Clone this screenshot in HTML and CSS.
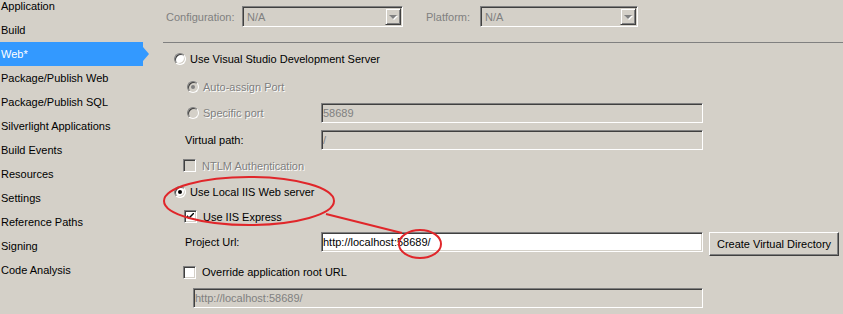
FILE: index.html
```html
<!DOCTYPE html>
<html lang="en">

<head>
    <meta charset="UTF-8">
    <title>Web - Project Properties</title>
    <link rel="stylesheet" href="styles.css">
</head>

<body>
    <div class="page">
        <nav class="sidebar">
            <div class="nav-item">Application</div>
            <div class="nav-item">Build</div>
            <div class="nav-item active">Web*</div>
            <div class="nav-item">Package/Publish Web</div>
            <div class="nav-item">Package/Publish SQL</div>
            <div class="nav-item">Silverlight Applications</div>
            <div class="nav-item">Build Events</div>
            <div class="nav-item">Resources</div>
            <div class="nav-item">Settings</div>
            <div class="nav-item">Reference Paths</div>
            <div class="nav-item">Signing</div>
            <div class="nav-item">Code Analysis</div>
        </nav>

        <main class="panel">
            <div class="toolbar">
                <span class="toolbar-label config-label">Configuration:</span>
                <div class="combo config-combo">
                    <span>N/A</span>
                    <span class="combo-btn"></span>
                </div>
                <span class="toolbar-label platform-label">Platform:</span>
                <div class="combo platform-combo">
                    <span>N/A</span>
                    <span class="combo-btn"></span>
                </div>
            </div>
            <div class="divider"></div>

            <div class="form">
                <!-- Visual Studio Development Server -->
                <div class="row row-vs top-level">
                    <label class="option">
                        <span class="radio"></span>
                        <span>Use Visual Studio Development Server</span>
                    </label>
                </div>
                <div class="row row-auto sub">
                    <label class="option disabled-text">
                        <span class="radio disabled checked"></span>
                        <span>Auto-assign Port</span>
                    </label>
                </div>
                <div class="row row-port sub">
                    <label class="option label-col port-col disabled-text">
                        <span class="radio disabled"></span>
                        <span>Specific port</span>
                    </label>
                    <div class="textbox">58689</div>
                </div>
                <div class="row row-path field">
                    <span class="label-col field-col">Virtual path:</span>
                    <div class="textbox">/</div>
                </div>
                <div class="row row-ntlm check">
                    <label class="option check-option disabled-text">
                        <span class="checkbox disabled"></span>
                        <span>NTLM Authentication</span>
                    </label>
                </div>

                <!-- Local IIS -->
                <div class="row row-iis top-level">
                    <label class="option">
                        <span class="radio checked"></span>
                        <span>Use Local IIS Web server</span>
                    </label>
                </div>
                <div class="row row-express check-express">
                    <label class="option check-option">
                        <span class="checkbox">
                            <svg width="7" height="7" viewBox="0 0 7 7">
                                <path d="M0 2 L0 4 L2 6 L7 1 L7 -1 L2 4 Z" fill="#000" />
                            </svg>
                        </span>
                        <span>Use IIS Express</span>
                    </label>
                </div>
                <div class="row row-url field">
                    <span class="label-col field-col">Project Url:</span>
                    <div class="textbox enabled">http://localhost:58689/</div>
                    <button class="btn">Create Virtual Directory</button>
                </div>
                <div class="row row-override check">
                    <label class="option check-option">
                        <span class="checkbox"></span>
                        <span>Override application root URL</span>
                    </label>
                </div>
                <div class="row row-root nested">
                    <div class="textbox wide">http://localhost:58689/</div>
                </div>
            </div>
        </main>

        <svg class="marks" width="843" height="314" viewBox="0 0 843 314">
            <ellipse cx="249" cy="201" rx="85" ry="24" />
            <line x1="326" y1="214" x2="402" y2="233" />
            <ellipse cx="420" cy="244" rx="21" ry="14" />
        </svg>
    </div>
</body>

</html>
```

FILE: styles.css
```css
body {
    margin: 0;
    background-color: #d4d0c8;
    font-family: "Liberation Sans", Arial, sans-serif;
    font-size: 11px;
    color: #000;
}

.page {
    position: relative;
    display: flex;
    width: 843px;
    height: 314px;
    overflow: hidden;
}

/* Left navigation */
.sidebar {
    width: 163px;
    flex: none;
    margin-top: -6px;
}

.nav-item {
    position: relative;
    box-sizing: border-box;
    width: 143px;
    height: 24px;
    line-height: 24px;
    padding-left: 1px;
    white-space: nowrap;
}

.nav-item.active {
    background-color: #3399ff;
    color: #fff;
}

.nav-item.active::after {
    content: "";
    position: absolute;
    left: 100%;
    top: 5px;
    border-left: 6px solid #3399ff;
    border-top: 7px solid transparent;
    border-bottom: 7px solid transparent;
}

/* Right panel */
.panel {
    flex: 1;
}

.toolbar {
    display: flex;
    align-items: center;
    height: 21px;
    padding: 6px 0 0 3px;
}

.toolbar-label {
    color: #808080;
}

.config-label {
    width: 76px;
}

.platform-label {
    width: 54px;
    margin-left: 23px;
}

.combo {
    display: flex;
    align-items: center;
    justify-content: space-between;
    box-sizing: border-box;
    height: 21px;
    padding: 0 1px 0 4px;
    border: 1px solid;
    border-color: #808080 #fff #fff #808080;
    box-shadow: inset 1px 1px #404040, inset -1px -1px #d4d0c8;
    color: #808080;
}

.config-combo {
    width: 161px;
}

.platform-combo {
    width: 158px;
}

.combo-btn {
    display: flex;
    align-items: center;
    justify-content: center;
    box-sizing: border-box;
    width: 16px;
    height: 17px;
    border: 1px solid;
    border-color: #d4d0c8 #404040 #404040 #d4d0c8;
    box-shadow: inset 1px 1px #fff, inset -1px -1px #808080;
}

.combo-btn::after {
    content: "";
    border-top: 4px solid #808080;
    border-left: 4px solid transparent;
    border-right: 4px solid transparent;
    filter: drop-shadow(1px 1px 0 #fff);
}

.divider {
    margin-top: 15px;
    height: 1px;
    background-color: #808080;
}

.form {
    padding-top: 2px;
}

.row {
    display: flex;
    align-items: center;
    white-space: nowrap;
}

.row-vs { height: 27px; }
.row-auto { height: 29px; }
.row-port { height: 24px; }
.row-path { height: 30px; }
.row-ntlm { height: 21px; }
.row-iis { height: 31px; }
.row-express { height: 19px; }
.row-url { height: 32px; }
.row-override { height: 28px; }
.row-root { height: 24px; }

.top-level { padding-left: 11px; }
.check { padding-left: 20px; }
.check-express { padding-left: 21px; }
.field { padding-left: 22px; }
.sub { padding-left: 24px; }
.nested { padding-left: 30px; }

.option {
    display: flex;
    align-items: center;
    gap: 4px;
}

.check-option {
    gap: 6px;
}

.label-col {
    flex: none;
}

.port-col {
    width: 134px;
}

.field-col {
    width: 136px;
}

.disabled-text {
    color: #808080;
    text-shadow: 1px 1px 0 #fff;
}

/* Classic controls */
.radio {
    position: relative;
    flex: none;
    box-sizing: border-box;
    width: 12px;
    height: 12px;
    border-radius: 50%;
    border: 1px solid;
    border-color: #808080 #fff #fff #808080;
    box-shadow: inset 1px 1px #404040, inset -1px -1px #d4d0c8;
    background-color: #fff;
}

.radio.disabled {
    background-color: #d4d0c8;
}

.radio.checked::after {
    content: "";
    position: absolute;
    left: 3px;
    top: 3px;
    width: 4px;
    height: 4px;
    border-radius: 50%;
    background-color: #000;
}

.radio.disabled.checked::after {
    background-color: #808080;
}

.checkbox {
    display: flex;
    align-items: center;
    justify-content: center;
    flex: none;
    box-sizing: border-box;
    width: 13px;
    height: 13px;
    border: 1px solid;
    border-color: #808080 #fff #fff #808080;
    box-shadow: inset 1px 1px #404040, inset -1px -1px #d4d0c8;
    background-color: #fff;
}

.checkbox.disabled {
    background-color: #d4d0c8;
}

.textbox {
    box-sizing: border-box;
    width: 382px;
    height: 20px;
    line-height: 18px;
    padding-left: 1px;
    border: 1px solid;
    border-color: #808080 #fff #fff #808080;
    box-shadow: inset 1px 1px #404040, inset -1px -1px #d4d0c8;
    background-color: #d4d0c8;
    color: #808080;
}

.textbox.enabled {
    background-color: #fff;
    color: #000;
}

.textbox.wide {
    width: 510px;
}

.btn {
    box-sizing: border-box;
    width: 130px;
    height: 24px;
    margin: 4px 0 0 6px;
    padding: 0;
    border: 1px solid;
    border-color: #fff #404040 #404040 #fff;
    box-shadow: inset -1px -1px #808080;
    background-color: #d4d0c8;
    font-family: "Liberation Sans", Arial, sans-serif;
    font-size: 11px;
    color: #000;
}

/* Red hand-drawn annotation */
.marks {
    position: absolute;
    left: 0;
    top: 0;
    pointer-events: none;
}

.marks ellipse,
.marks line {
    fill: none;
    stroke: #e0262a;
    stroke-width: 2;
}
```
